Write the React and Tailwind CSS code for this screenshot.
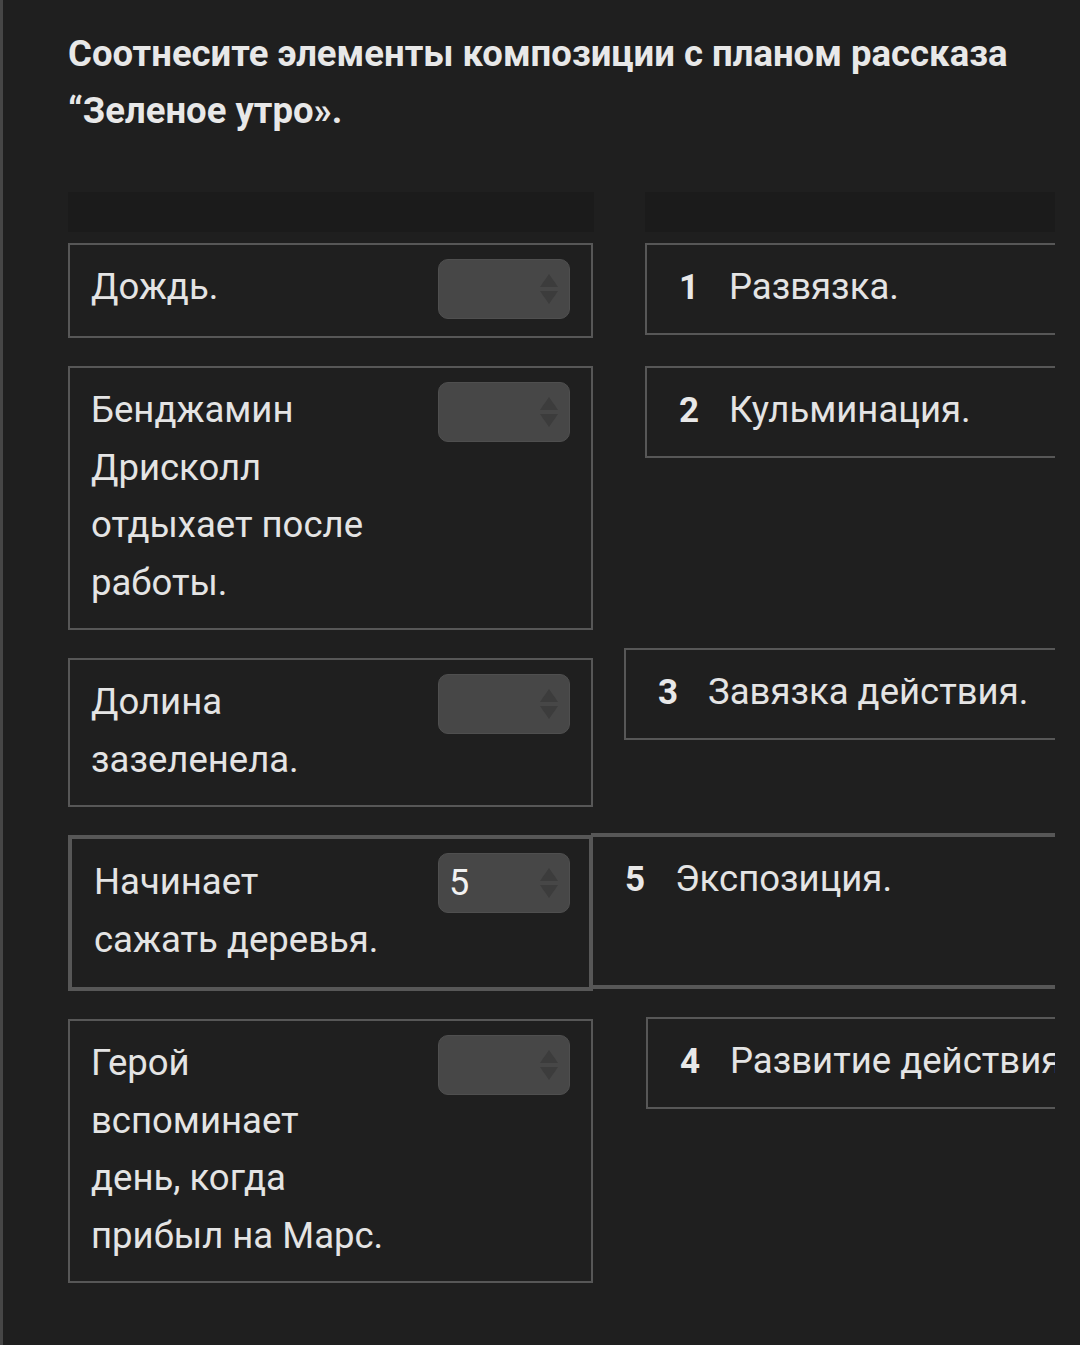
import React from 'react';

const rows = [
  { lines: ['Дождь.'], value: '', num: '1', label: 'Развязка.', right: 'ml-[52px]' },
  { lines: ['Бенджамин', 'Дрисколл', 'отдыхает после', 'работы.'], value: '', num: '2', label: 'Кульминация.', right: 'ml-[52px]' },
  { lines: ['Долина', 'зазеленела.'], value: '', num: '3', label: 'Завязка действия.', right: 'ml-[31px] -mt-[10px]' },
  { lines: ['Начинает', 'сажать деревья.'], value: '5', num: '5', label: 'Экспозиция.', right: '-ml-[2px] -mt-[2px] mb-[2px] self-stretch', active: true },
  { lines: ['Герой', 'вспоминает', 'день, когда', 'прибыл на Марс.'], value: '', num: '4', label: 'Развитие действия.', right: 'ml-[53px] -mt-[2px]' },
];

const SelectBox = ({ value, active }) => (
  <div
    className={`w-[132px] h-[60px] shrink-0 rounded-[10px] bg-[#474747] border border-[#4f4f4f] flex items-center justify-between pl-[10px] pr-[10px] ${
      active ? '' : 'mt-[1px]'
    }`}
  >
    <span className="text-[36px] leading-none text-[#f2f2f2]">{value}</span>
    <svg width="20" height="34" viewBox="0 0 20 34">
      <path d="M10 2 L19 15 L1 15 Z" fill="#3c3c3c" />
      <path d="M1 19 L19 19 L10 32 Z" fill="#3c3c3c" />
    </svg>
  </div>
);

export default function App() {
  return (
    <div
      className="min-h-[1345px] w-[1080px] bg-[#1f1f1f] border-l-[3px] border-[#464646] text-[#e4e4e4]"
      style={{ fontFamily: 'Roboto, "Liberation Sans", sans-serif' }}
    >
      <div className="pl-[65px] pt-[25px]">
        <h1 className="text-[36.5px] leading-[57px] font-bold text-[#e8e8e8] w-[980px]">
          Соотнесите элементы композиции с планом рассказа “Зеленое утро».
        </h1>

        <div className="w-[987px] overflow-hidden mt-[53px]">
          <div className="flex gap-[51px] h-[40px]">
            <div className="w-[526px] bg-[#1b1b1b]" />
            <div className="flex-1 bg-[#1b1b1b]" />
          </div>

          <div className="flex flex-col gap-[28px] mt-[11px] pb-[20px]">
            {rows.map((r, i) => (
              <div key={i} className="flex items-start">
                <div
                  className={`w-[525px] shrink-0 flex justify-between items-start border-[#575757] ${
                    r.active ? 'border-[4px] pl-[22px] pr-[19px] pt-[14px] pb-[19px]' : 'border-2 pl-[21px] pr-[21px] pt-[13px] pb-[17px]'
                  }`}
                >
                  <p className="text-[36.5px] leading-[57.5px]">
                    {r.lines.map((l, j) => (
                      <span key={j} className="block whitespace-nowrap">{l}</span>
                    ))}
                  </p>
                  <SelectBox value={r.value} active={r.active} />
                </div>
                <div
                  className={`w-[520px] shrink-0 ${r.right} ${
                    r.active ? 'border-y-[4px] border-l-2' : 'border-2 h-[92px]'
                  } border-[#575757] pl-[32px] py-[13px] flex items-baseline`}
                >
                  <span className="w-[50px] shrink-0 text-[35px] font-bold text-[#e8e8e8]">{r.num}</span>
                  <span className="text-[36.5px] leading-[57px] whitespace-nowrap">{r.label}</span>
                </div>
              </div>
            ))}
          </div>
        </div>
      </div>
    </div>
  );
}
